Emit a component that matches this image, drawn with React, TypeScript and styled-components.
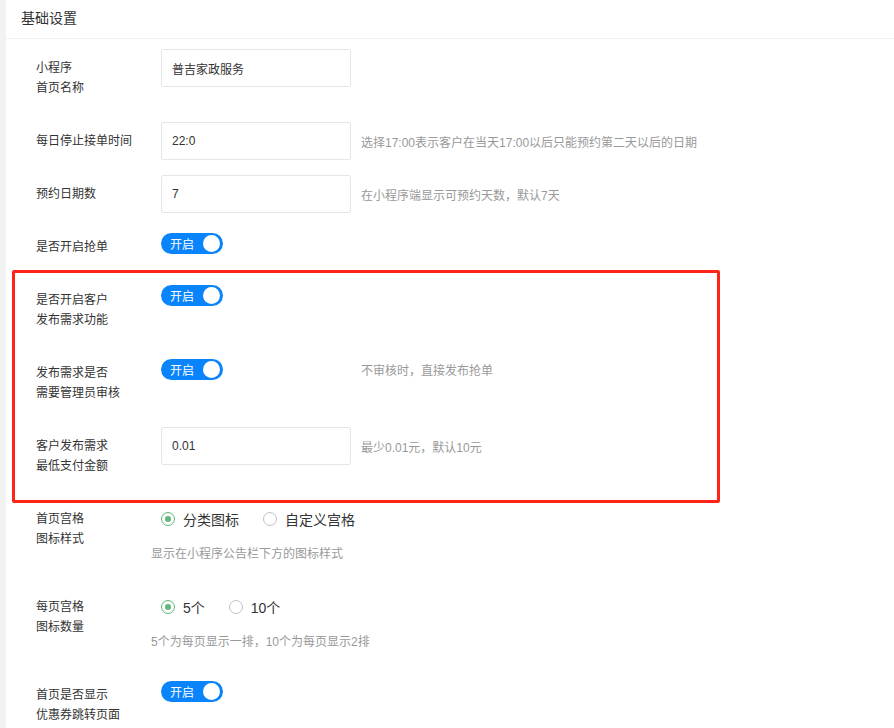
import React from 'react';
import styled, { createGlobalStyle } from 'styled-components';

const GlobalStyle = createGlobalStyle`
  html, body {
    margin: 0;
    padding: 0;
    background: #fff;
  }
  body {
    font-family: "Liberation Sans", "Noto Sans CJK SC", sans-serif;
    color: #333;
  }
`;

const Page = styled.div`
  display: flex;
  min-height: 728px;
  background: #f2f2f2;
  padding-left: 6px;
`;

const Card = styled.div`
  flex: 1;
  background: #fff;
`;

const CardHeader = styled.div`
  height: 38px;
  line-height: 36px;
  padding-left: 15px;
  font-size: 14px;
  color: #333;
  border-bottom: 1px solid #f2f2f2;
`;

const Form = styled.div`
  padding: 10px 0 0 15px;
`;

const Row = styled.div`
  display: flex;
  align-items: flex-start;
  margin-bottom: 15px;
`;

const Label = styled.div`
  width: 140px;
  box-sizing: border-box;
  padding: 9px 15px;
  font-size: 12px;
  line-height: 20px;
  color: #333;
  flex-shrink: 0;
`;

const Control = styled.div<{ $h?: number }>`
  display: flex;
  align-items: center;
  height: ${(p) => p.$h ?? 38}px;
`;

const Stack = styled.div`
  display: flex;
  flex-direction: column;
`;

const Input = styled.input`
  width: 190px;
  height: 38px;
  box-sizing: border-box;
  border: 1px solid #e6e6e6;
  border-radius: 2px;
  padding: 0 10px;
  font-family: inherit;
  font-size: 12px;
  color: #333;
  outline: none;
  background: #fff;
`;

const Help = styled.span<{ $offset?: number }>`
  margin-left: ${(p) => p.$offset ?? 10}px;
  font-size: 12px;
  color: #999;
`;

const HelpBelow = styled.div`
  margin: 6px 0 0 -10px;
  padding-bottom: 9px;
  line-height: 20px;
  font-size: 12px;
  color: #999;
`;

const Switch = styled.div`
  display: inline-flex;
  align-items: center;
  width: 62px;
  height: 21px;
  box-sizing: border-box;
  padding: 0 3px 0 9px;
  border-radius: 11px;
  background: #0a84fb;
  color: #fff;
  font-size: 12px;
`;

const Knob = styled.span`
  margin-left: auto;
  width: 17px;
  height: 17px;
  border-radius: 50%;
  background: #fff;
`;

const RadioGroup = styled.div`
  display: flex;
  align-items: center;
  gap: 24px;
`;

const RadioItem = styled.label`
  display: inline-flex;
  align-items: center;
  gap: 8px;
  font-size: 14px;
  color: #333;
`;

const RadioDot = styled.span<{ $checked?: boolean }>`
  width: 14px;
  height: 14px;
  box-sizing: border-box;
  border-radius: 50%;
  border: 1px solid ${(p) => (p.$checked ? '#5fb878' : '#c2c2c2')};
  display: inline-flex;
  align-items: center;
  justify-content: center;
  &::after {
    content: '';
    width: 6px;
    height: 6px;
    border-radius: 50%;
    background: ${(p) => (p.$checked ? '#5fb878' : 'transparent')};
  }
`;

const Highlight = styled.div`
  position: relative;
  &::before {
    content: '';
    position: absolute;
    top: -11px;
    bottom: -18px;
    left: -9px;
    width: 708px;
    box-sizing: border-box;
    border: 3px solid #ff2418;
    border-radius: 2px;
    pointer-events: none;
  }
`;

const Toggle: React.FC = () => (
  <Switch>
    开启
    <Knob />
  </Switch>
);

const Radio: React.FC<{ checked?: boolean; text: string }> = ({ checked, text }) => (
  <RadioItem>
    <RadioDot $checked={checked} />
    {text}
  </RadioItem>
);

const App: React.FC = () => {
  return (
    <>
      <GlobalStyle />
      <Page>
        <Card>
          <CardHeader>基础设置</CardHeader>
          <Form>
            <Row>
              <Label>
                小程序
                <br />
                首页名称
              </Label>
              <Control>
                <Input defaultValue="普吉家政服务" />
              </Control>
            </Row>
            <Row>
              <Label>每日停止接单时间</Label>
              <Control>
                <Input defaultValue="22:0" />
                <Help>选择17:00表示客户在当天17:00以后只能预约第二天以后的日期</Help>
              </Control>
            </Row>
            <Row>
              <Label>预约日期数</Label>
              <Control>
                <Input defaultValue="7" />
                <Help>在小程序端显示可预约天数，默认7天</Help>
              </Control>
            </Row>
            <Row>
              <Label>是否开启抢单</Label>
              <Control $h={30}>
                <Toggle />
              </Control>
            </Row>
            <Highlight>
              <Row>
                <Label>
                  是否开启客户
                  <br />
                  发布需求功能
                </Label>
                <Control $h={28}>
                  <Toggle />
                </Control>
              </Row>
              <Row>
                <Label>
                  发布需求是否
                  <br />
                  需要管理员审核
                </Label>
                <Control $h={30}>
                  <Toggle />
                  <Help $offset={138}>不审核时，直接发布抢单</Help>
                </Control>
              </Row>
              <Row>
                <Label>
                  客户发布需求
                  <br />
                  最低支付金额
                </Label>
                <Control>
                  <Input defaultValue="0.01" />
                  <Help>最少0.01元，默认10元</Help>
                </Control>
              </Row>
            </Highlight>
            <Row>
              <Label>
                首页宫格
                <br />
                图标样式
              </Label>
              <Stack>
                <Control>
                  <RadioGroup>
                    <Radio checked text="分类图标" />
                    <Radio text="自定义宫格" />
                  </RadioGroup>
                </Control>
                <HelpBelow>显示在小程序公告栏下方的图标样式</HelpBelow>
              </Stack>
            </Row>
            <Row>
              <Label>
                每页宫格
                <br />
                图标数量
              </Label>
              <Stack>
                <Control>
                  <RadioGroup>
                    <Radio checked text="5个" />
                    <Radio text="10个" />
                  </RadioGroup>
                </Control>
                <HelpBelow>5个为每页显示一排，10个为每页显示2排</HelpBelow>
              </Stack>
            </Row>
            <Row>
              <Label>
                首页是否显示
                <br />
                优惠券跳转页面
              </Label>
              <Control $h={30}>
                <Toggle />
              </Control>
            </Row>
          </Form>
        </Card>
      </Page>
    </>
  );
};

export default App;
